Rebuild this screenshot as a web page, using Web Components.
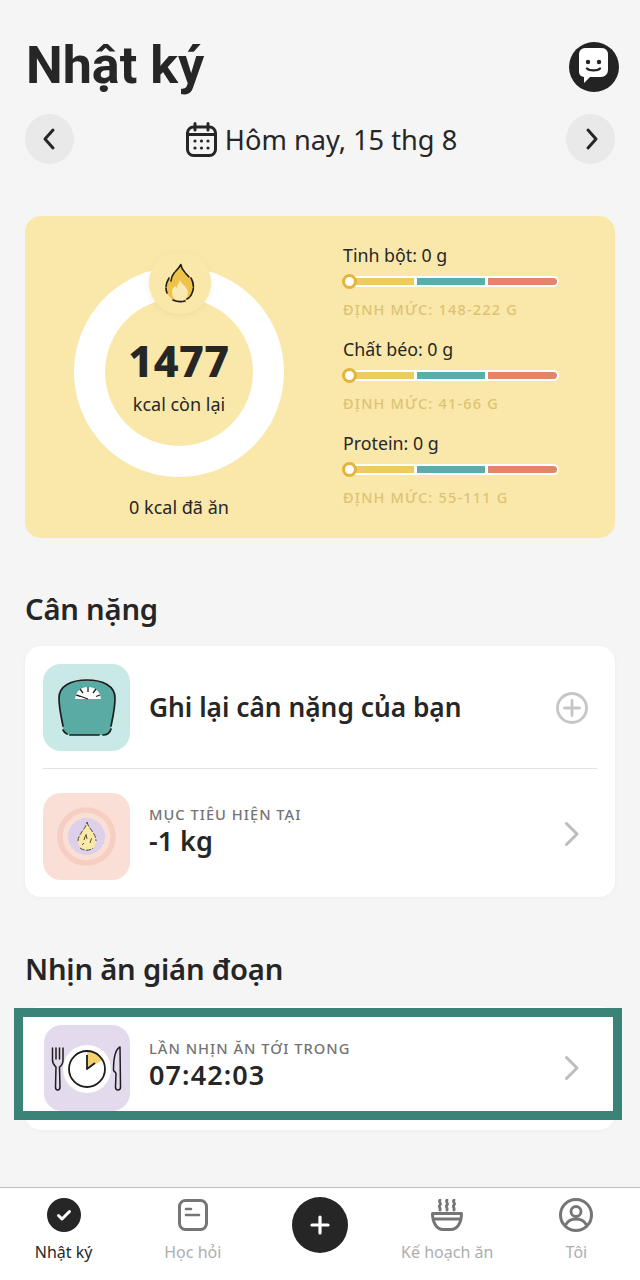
<!doctype html>
<html lang="vi"><head><meta charset="utf-8"><style>
html,body{margin:0;padding:0;background:#f5f5f5}
body{width:640px;height:1280px;overflow:hidden;font-family:"Noto Sans","Liberation Sans",sans-serif;color:#262626;display:flex;flex-direction:column}
main{flex:1;padding:0 25px;display:flex;flex-direction:column;min-height:0}
</style></head><body>
<main>
<app-header></app-header>
<date-nav>Hôm nay, 15 thg 8</date-nav>
<summary-card></summary-card>
<section-title style="--top:53px">Cân nặng</section-title>
<info-card style="--h:251px">
  <info-row variant="large" icon="scale" action="plus" main="Ghi lại cân nặng của bạn" style="--pad:18px 0 17px 18px"></info-row>
  <card-divider></card-divider>
  <info-row icon="goal" action="chev" label="MỤC TIÊU HIỆN TẠI" main="-1 kg" style="--pad:24px 0 18px 18px;--lift:10px;--alift:6px"></info-row>
</info-card>
<section-title style="--top:54px">Nhịn ăn gián đoạn</section-title>
<info-card style="--h:124px">
  <info-row icon="clock" action="chev" label="LẦN NHỊN ĂN TỚI TRONG" main="07:42:03" highlighted style="--pad:19px 0 19px 19px;--lift:5px;--ls:1.100px"></info-row>
</info-card>
</main>
<tab-bar></tab-bar>
<script>
function def(name,html){customElements.define(name,class extends HTMLElement{
  connectedCallback(){if(this.shadowRoot)return;const r=this.attachShadow({mode:'open'});r.innerHTML=typeof html==='function'?html(this):html;}
});}
def('app-header',`<style>:host{display:flex;justify-content:space-between;align-items:flex-start;height:114px;box-sizing:border-box;padding-top:33px}
h1{margin:0;font:700 52px/66px Roboto,"Noto Sans",sans-serif;letter-spacing:0;margin-left:1px;color:#262626}
svg{margin:9px -4px 0 0}</style>
<h1>Nhật ký</h1>
<svg width="50" height="50" viewBox="0 0 50 50"><circle cx="25" cy="25" r="25" fill="#232323"/>
<path d="M16 6H33a6 6 0 0 1 6 6V28a7 7 0 0 1-7 7H21l-6 6V35a5 5 0 0 1-5-5V12a6 6 0 0 1 6-6Z" fill="#fff"/>
<circle cx="19" cy="20" r="2.200" fill="#232323"/><circle cx="30" cy="20" r="2.200" fill="#232323"/>
<path d="M18 26.500c2.500 2.500 10.500 2.500 13 0" fill="none" stroke="#232323" stroke-width="2.400" stroke-linecap="round"/></svg>`);
def('date-nav',`<style>:host{display:flex;align-items:center;justify-content:space-between;height:50px}
.b{width:49px;height:50px;border-radius:50%;background:#e9e9e9;display:flex;align-items:center;justify-content:center}
.c{display:flex;align-items:center;gap:8px;margin-left:3px;font:400 27.200px/50px "Noto Sans",sans-serif;color:#262626}
.c span{position:relative;top:1px}</style>
<div class="b"><svg width="16" height="24" viewBox="0 0 16 24"><path d="M11 3 3 12 11 21" fill="none" stroke="#262626" stroke-width="3" stroke-linecap="round" stroke-linejoin="round"/></svg></div>
<div class="c"><svg width="31" height="35" viewBox="0 0 31 35"><rect x="1.500" y="5" width="28" height="28.500" rx="6" fill="none" stroke="#262626" stroke-width="3"/><path d="M9 1.500V8M22 1.500V8M2 12.500H29" stroke="#262626" stroke-width="3" stroke-linecap="round"/><g fill="#262626"><circle cx="9" cy="19" r="1.600"/><circle cx="15.500" cy="19" r="1.600"/><circle cx="22" cy="19" r="1.600"/><circle cx="9" cy="26" r="1.600"/><circle cx="15.500" cy="26" r="1.600"/><circle cx="22" cy="26" r="1.600"/></g></svg><span><slot></slot></span></div>
<div class="b"><svg width="16" height="24" viewBox="0 0 16 24"><path d="M5 3 13 12 5 21" fill="none" stroke="#262626" stroke-width="3" stroke-linecap="round" stroke-linejoin="round"/></svg></div>`);
def('summary-card',`<style>:host{display:grid;grid-template-columns:318px 1fr;height:322px;margin-top:52px;background:#fae8ab;border-radius:16px;box-sizing:border-box;padding:20px 0 0 0}
.l{display:flex;flex-direction:column;align-items:center}
.ring{position:relative;width:210px;height:210px;margin-top:31px;border-radius:50%;background:#fff;margin-left:-10px;display:flex;align-items:center;justify-content:center}
.in{width:148px;height:148px;border-radius:50%;background:#fae8ab;display:flex;flex-direction:column;align-items:center;box-sizing:border-box;padding-top:38px}
.num{font:800 43px/50px "Noto Sans",sans-serif;letter-spacing:.5px}
.kc{font:400 18px/24px "Noto Sans",sans-serif;margin-top:6px}
.fl{position:absolute;left:75px;top:-15px;width:62px;height:62px;border-radius:50%;background:#fae8ab;box-shadow:0 2px 6px rgba(190,170,110,.18);display:flex;align-items:center;justify-content:center}
.eat{font:400 18px/24px "Noto Sans",sans-serif;margin:18px 0 0 -10px}
.r{display:flex;flex-direction:column}</style>
<div class="l"><div class="ring"><div class="in"><div class="num">1477</div><div class="kc">kcal còn lại</div></div>
<div class="fl"><svg width="32" height="40" viewBox="0 0 32 40">
<path d="M17 1c0 6 4 8 8 13 1 1 2 3 2 3l1-2c3 6 3 11 1 15-3 6-8 9-13 9S6 36 3 30c-2-5-1-10 2-15l2 3c0-8 7-10 10-17Z" fill="#efc24a"/>
<path d="M16 17c1 4 7 6 8 12 0 6-4 9-8 9s-8-3-8-9c0-3 2-5 3-6l2 2c0-3 2-5 3-8Z" fill="#fbe9b3"/>
<path d="M7 18c0-8 7-10 10-17 0 6 4 8 8 13M5 15c-3 5-4 10-2 15M27 15c3 5 3 11 1 15-1 3-3 5-5 6M9 37c4 2 9 2 12 1" fill="none" stroke="#1d1d1d" stroke-width="1.600" stroke-linecap="round" stroke-dasharray="9 1.500"/>
</svg></div></div>
<div class="eat">0 kcal đã ăn</div></div>
<div class="r"><macro-bar name="Tinh bột: 0 g" limit="ĐỊNH MỨC: 148-222 G"></macro-bar><macro-bar name="Chất béo: 0 g" limit="ĐỊNH MỨC: 41-66 G"></macro-bar><macro-bar name="Protein: 0 g" limit="ĐỊNH MỨC: 55-111 G"></macro-bar></div>`);
def('macro-bar',t=>`<style>:host{display:block;height:94px;box-sizing:border-box;padding-top:7px}
.n{font:400 17.800px/26px "Noto Sans",sans-serif;color:#262626;margin-top:-1px}
.t{position:relative;width:216px;height:11px;background:#fff;border-radius:6px;margin-top:8px;display:flex;gap:3px;box-sizing:border-box;padding:2px 2px 2px 7px}
.t i{display:block;height:7px}
.a{background:#eecb5f;flex:0 0 64px}.b{background:#5aada8;flex:0 0 68px}.c{background:#e58468;flex:1;border-radius:0 4px 4px 0}
.k{position:absolute;left:-1px;top:-2px;width:15px;height:15px;border-radius:50%;background:#fff;border:3px solid #e3b53c;box-sizing:border-box}
.l{font:500 14.500px/20px "Noto Sans",sans-serif;letter-spacing:1.200px;color:#dfc271;margin-top:12px;white-space:nowrap}</style>
<div class="n">${t.getAttribute('name')}</div><div class="t"><i class="a"></i><i class="b"></i><i class="c"></i><span class="k"></span></div><div class="l">${t.getAttribute('limit')}</div>`);
def('section-title',`<style>:host{display:block;margin-top:var(--top,55px);height:36px;margin-bottom:19px;flex:none;font:600 29.200px/36px "Noto Sans",sans-serif;color:#262626;letter-spacing:-.2px;white-space:nowrap}</style><slot></slot>`);
def('info-card',`<style>:host{display:flex;flex-direction:column;flex:none;height:var(--h);box-sizing:border-box;background:#fff;border-radius:16px;box-shadow:0 1px 6px rgba(0,0,0,.03)}</style><slot></slot>`);
def('card-divider',`<style>:host{display:block;flex:none;height:1px;background:#e2e2e2;margin:0 18px}</style>`);
const icons={
scale:`<svg width="87" height="87" viewBox="0 0 87 87"><rect width="87" height="87" rx="18" fill="#c9e9e6"/>
<path d="M16 34C16 22 28 16 44 16S72 22 72 34C72 45 69 59 68 64 67 69 64 71 60 71H28C24 71 21 69 20 64 19 59 16 45 16 34Z" fill="#5aaba3"/>
<path d="M32 35C33 27 38 23 45 23S57 27 58 35Z" fill="#fff"/>
<path d="M37 25l3 4M45 23v5M53 25l-3 4M33 31l4 1.500M57 31l-4 1.500M45 35l-11-4" stroke="#222" stroke-width="1.300"/>
<path d="M20 62C19 56 16 45 16 34 16 22 28 16 44 16S72 22 72 34C72 45 69 57 68 62M27 71H56M60 71c4 0 7-2 8-6M20 66c1 2 2 3 4 4" fill="none" stroke="#1d1d1d" stroke-width="1.700" stroke-linecap="round"/></svg>`,
goal:`<svg width="87" height="87" viewBox="0 0 87 87"><rect width="87" height="87" rx="18" fill="#f9dfd6"/>
<circle cx="43.500" cy="43.500" r="26.500" fill="none" stroke="#f6cfc2" stroke-width="5.500"/><circle cx="43.500" cy="43.500" r="18.500" fill="#dcd0ea"/>
<path d="M44 29c1 6 9 11 9 19 0 6-4 9-9 9s-9-3-9-9c0-7 8-12 9-19Z" fill="#fbe7a6"/>
<path d="M44 29c1 6 9 11 9 19M35 48c0-7 8-12 9-19M37 55c4 3 10 3 13 0M41 47l2-6 1 5M47 50l2-6M39 52l2-2" fill="none" stroke="#3a3a30" stroke-width=".9" stroke-dasharray="5 1.500"/></svg>`,
clock:`<svg width="86" height="86" viewBox="0 0 86 86"><rect width="86" height="86" rx="18" fill="#e4daed"/>
<circle cx="43" cy="44" r="24" fill="#fff"/><path d="M43 26a18 18 0 0 1 15.600 9L43 44Z" fill="#f6d26f"/>
<circle cx="43" cy="44" r="18" fill="none" stroke="#1d1d1d" stroke-width="1.800"/><path d="M43 30V44L51 38" fill="none" stroke="#1d1d1d" stroke-width="1.800" stroke-linejoin="round"/>
<path d="M8.500 23V35C8.500 39 11 41 12 42L11.500 62C11.500 66 16 66 16 62L15.500 42C17 41 19 39 19 35V23M12 23V34M15.500 23V34" fill="none" stroke="#1d1d1d" stroke-width="1.500" stroke-linecap="round"/>
<path d="M76 22C72 24 69.500 32 69.500 45 70 47 72 47 72 49L71.500 62C71.500 66 76.500 66 76.500 62Z" fill="none" stroke="#1d1d1d" stroke-width="1.500" stroke-linejoin="round"/></svg>`};
const acts={plus:`<svg width="32" height="32" viewBox="0 0 32 32"><circle cx="16" cy="16" r="14.500" fill="none" stroke="#c6c6c6" stroke-width="2.800"/><path d="M16 8.500V23.500M8.500 16H23.500" stroke="#c6c6c6" stroke-width="2.800" stroke-linecap="round"/></svg>`,
chev:`<svg width="32" height="32" viewBox="0 0 32 32"><path d="M10.500 5.500 21 16 10.500 26.500" fill="none" stroke="#bdbdbd" stroke-width="3" stroke-linecap="round" stroke-linejoin="round"/></svg>`};
def('info-row',t=>{const a=n=>t.getAttribute(n);const large=a('variant')==='large';const hl=t.hasAttribute('highlighted');return `<style>:host{display:flex;flex:none;align-items:center;gap:19px;padding:var(--pad);position:relative}
svg{display:block;flex:none}
.tx{flex:1;min-width:0;position:relative;z-index:2;margin-bottom:var(--lift,0)}
.ic{position:relative;z-index:2;display:block;flex:none}
.ac{position:relative;z-index:2;margin-right:27px;margin-bottom:var(--alift,0)}
.l{font:500 14.700px/20px "Noto Sans",sans-serif;letter-spacing:1px;color:#747474;white-space:nowrap}
.m{font:600 27px/36px "Noto Sans",sans-serif;letter-spacing:var(--ls,0);color:#262626;white-space:nowrap;margin-top:-1px}
.big{font:600 26.300px/36px "Noto Sans",sans-serif}
.hl{position:absolute;left:-11px;right:-7px;top:2px;height:94px;border:9px solid #3b8378;background:#fff;z-index:1}
</style>${hl?'<div class="hl"></div>':''}<span class="ic">${icons[a('icon')]}</span><div class="tx">${a('label')?`<div class="l">${a('label')}</div>`:''}<div class="m ${large?'big':''}">${a('main')}</div></div><span class="ac">${acts[a('action')]}</span>`});
def('tab-item',t=>`<style>:host{display:flex;flex-direction:column;align-items:center;flex:1 1 0;height:92px;box-sizing:border-box;padding-top:9px;min-width:0}
.i{height:36px;display:flex;align-items:center;justify-content:center}
.t{font:400 16px/22px "Noto Sans",sans-serif;margin-top:8px;color:${t.hasAttribute('active')?'#262626':'#aeaeae'};white-space:nowrap}</style>
<div class="i"><slot></slot></div><div class="t">${t.getAttribute('text')}</div>`);
def('tab-bar',`<style>:host{display:flex;height:93px;box-sizing:border-box;background:#fff;border-top:1px solid #bdbdbd}
.add{flex:1 1 0;display:flex;justify-content:center;padding-top:9px}
.add span{width:56px;height:56px;border-radius:50%;background:#262626;display:flex;align-items:center;justify-content:center}
.nudge{padding-right:2px}</style>
<tab-item class="nudge" text="Nhật ký" active><svg width="34" height="34" viewBox="0 0 34 34"><circle cx="17" cy="17" r="17" fill="#262626"/><path d="M11.500 17.500 15 21 22.500 13.500" fill="none" stroke="#fff" stroke-width="3" stroke-linecap="round" stroke-linejoin="round"/></svg></tab-item>
<tab-item text="Học hỏi"><svg width="30" height="32" viewBox="0 0 30 32"><rect x="1.500" y="1.500" width="27" height="29" rx="6" fill="none" stroke="#757575" stroke-width="3"/><path d="M8 10H13M8 16H21" stroke="#757575" stroke-width="2.600" stroke-linecap="round"/></svg></tab-item>
<div class="add"><span><svg width="20" height="20" viewBox="0 0 20 20"><path d="M10 2V18M2 10H18" stroke="#fff" stroke-width="3.200" stroke-linecap="round"/></svg></span></div>
<tab-item class="nudge" text="Kế hoạch ăn"><svg width="32" height="32" viewBox="0 0 32 32"><path d="M9 1c-2 2 2 3 0 5s1 3 0 5M16 1c-2 2 2 3 0 5s1 3 0 5M23 1c-2 2 2 3 0 5s1 3 0 5" fill="none" stroke="#757575" stroke-width="2.800" stroke-linecap="round"/><path d="M1.500 14.500H30.500C30.500 24 26 30.500 20 30.500H12C6 30.500 1.500 24 1.500 14.500ZM3 20H29" fill="none" stroke="#757575" stroke-width="3" stroke-linejoin="round"/></svg></tab-item>
<tab-item text="Tôi"><svg width="34" height="34" viewBox="0 0 34 34"><circle cx="17" cy="17" r="15.500" fill="none" stroke="#757575" stroke-width="3"/><circle cx="17" cy="13.500" r="5" fill="none" stroke="#757575" stroke-width="2.800"/><path d="M6.500 27C9 22 13 21 17 21S25 22 27.500 27" fill="none" stroke="#757575" stroke-width="2.800"/></svg></tab-item>`);
</script>
</body></html>
